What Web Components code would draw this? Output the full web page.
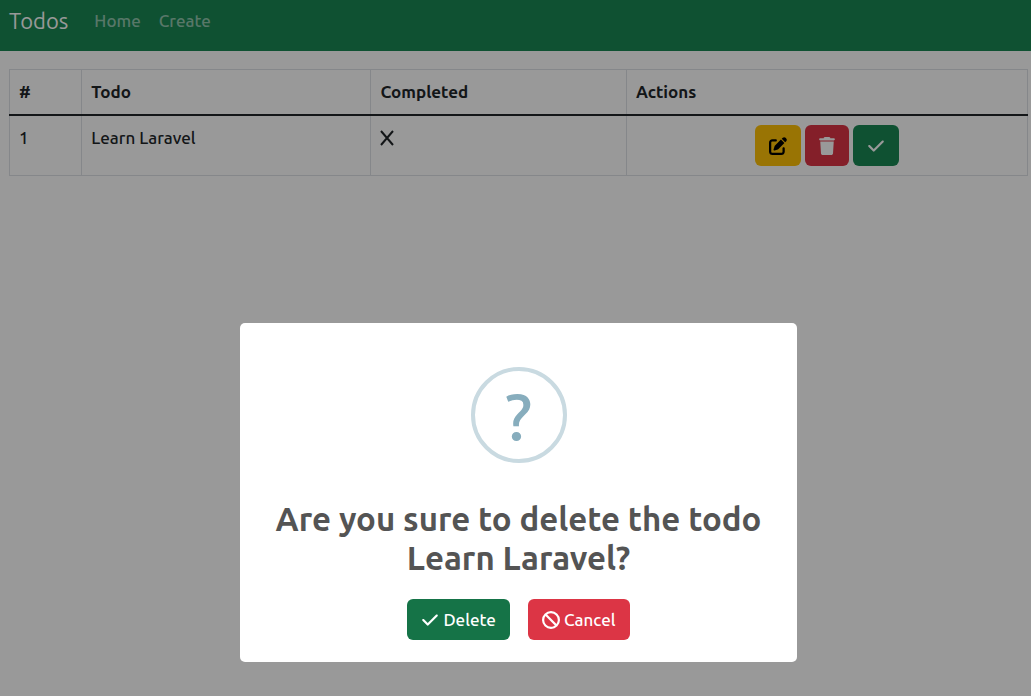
<!DOCTYPE html>
<html lang="en">
<head>
<meta charset="utf-8">
<meta name="viewport" content="width=device-width, initial-scale=1">
<title>Todos</title>
<style>
  body { margin: 0; background: #fff; color: #212529; font: 500 17px/26px Ubuntu, "Noto Sans", sans-serif; }
</style>
</head>
<body>
<todo-app></todo-app>
<script>
const ICONS = {
  edit: ['0 0 512 512', 'M471.6 21.7c-21.9-21.9-57.3-21.9-79.2 0L362.3 51.7l97.9 97.9 30.1-30.1c21.9-21.9 21.9-57.3 0-79.200L471.6 21.7zM172.400 241.700c-6.100 6.100-10.800 13.600-13.500 21.900l-29.600 88.800c-2.900 8.600-.6 18.100 5.800 24.600s15.900 8.700 24.600 5.800l88.800-29.600c8.200-2.700 15.700-7.400 21.900-13.500L437.700 172.300 339.700 74.300zM96 64C43 64 0 107 0 160V416c0 53 43 96 96 96H352c53 0 96-43 96-96V320c0-17.700-14.300-32-32-32s-32 14.300-32 32v96c0 17.700-14.300 32-32 32H96c-17.700 0-32-14.300-32-32V160c0-17.700 14.300-32 32-32h96c17.700 0 32-14.300 32-32s-14.300-32-32-32z'],
  trash: ['0 0 448 512', 'M135.200 17.700C140.600 6.800 151.700 0 163.800 0h120.400c12.100 0 23.200 6.800 28.600 17.700L320 32h96c17.700 0 32 14.300 32 32s-14.300 32-32 32H32C14.300 96 0 81.700 0 64s14.300-32 32-32h96zM32 128h384l-21.200 339c-1.600 25.300-22.600 45-47.900 45H101.100c-25.300 0-46.300-19.700-47.900-45z'],
  check: ['0 0 512 512', 'M470.600 105.400c12.500 12.500 12.500 32.800 0 45.300l-256 256c-12.500 12.500-32.800 12.500-45.300 0l-128-128c-12.500-12.500-12.500-32.800 0-45.300s32.800-12.500 45.300 0L192 338.700 425.400 105.400c12.500-12.500 32.800-12.500 45.300 0z'],
  ban: ['0 0 512 512', 'M367.200 412.500L99.500 144.800C77.100 176.100 64 214.500 64 256c0 106 86 192 192 192 41.500 0 79.900-13.100 111.200-35.500zm45.300-45.300C434.900 335.900 448 297.500 448 256c0-106-86-192-192-192-41.500 0-79.900 13.100-111.200 35.500zM0 256a256 256 0 1 1 512 0A256 256 0 1 1 0 256z']
};

function define(name, html, setup) {
  const template = document.createElement('template');
  template.innerHTML = html;
  customElements.define(name, class extends HTMLElement {
    constructor() {
      super();
      this.attachShadow({ mode: 'open' }).append(template.content.cloneNode(true));
    }
    connectedCallback() { if (setup) setup(this, this.shadowRoot); }
  });
}

define('app-icon', `
  <style>
    :host { display: inline-flex; }
    svg { display: block; height: 18px; fill: currentColor; }
  </style>
  <svg aria-hidden="true"><path/></svg>`,
  (host, root) => {
    const [box, d] = ICONS[host.getAttribute('name')];
    const [, , w, h] = box.split(' ').map(Number);
    const svg = root.querySelector('svg');
    svg.setAttribute('viewBox', box);
    svg.style.width = Math.round(18 * w / h) + 'px';
    root.querySelector('path').setAttribute('d', d);
  });

define('app-button', `
  <style>
    :host { display: inline-block; --bg: #198754; --fg: #fff; }
    :host([kind=warning]) { --bg: #ffc107; --fg: #000; }
    :host([kind=danger]) { --bg: #dc3545; }
    :host([kind=confirm]) { --bg: #157347; }
    button { display: flex; align-items: center; gap: 4px; height: 41px; margin: 0; padding: 0 14px;
      border: 0; border-radius: 6px; background: var(--bg); color: var(--fg); font: inherit; cursor: pointer; }
  </style>
  <button type="button"><slot></slot></button>`,
  (host, root) => {
    const label = host.getAttribute('label');
    if (label) root.querySelector('button').setAttribute('aria-label', label);
  });

define('app-navbar', `
  <style>
    :host { display: block; background: #198754; }
    nav { display: flex; align-items: center; gap: 18px; padding: 8px 9px 17px; }
    a { color: rgba(255,255,255,.55); text-decoration: none; }
    .brand { color: #fff; font-size: 22px; font-weight: 400; margin-right: 8px; }
  </style>
  <nav><a class="brand" href="#">Todos</a><a href="#home">Home</a><a href="#create">Create</a></nav>`);

define('todo-table', `
  <style>
    :host { display: block; }
    table { width: 100%; border-collapse: collapse; table-layout: fixed; }
    th, td { box-sizing: border-box; border: 1px solid #dee2e6; padding: 9px; text-align: left; vertical-align: top; }
    thead th { border-bottom: 2px solid #212529; }
    th:nth-child(1) { width: 7.1%; }
    th:nth-child(2) { width: 28.4%; }
    th:nth-child(3) { width: 25.1%; }
    .actions { display: flex; justify-content: center; gap: 4px; }
    .cross { display: block; width: 14px; height: 26px; }
  </style>
  <table>
    <thead><tr><th scope="col">#</th><th scope="col">Todo</th><th scope="col">Completed</th><th scope="col">Actions</th></tr></thead>
    <tbody><tr>
      <td>1</td><td>Learn Laravel</td>
      <td><svg class="cross" viewBox="0 0 14 26" role="img" aria-label="Not completed"><path d="M1 6L13 20M13 6L1 20" stroke="#212529" stroke-width="2"/></svg></td>
      <td><div class="actions">
        <app-button kind="warning" label="Edit"><app-icon name="edit"></app-icon></app-button>
        <app-button kind="danger" label="Delete"><app-icon name="trash"></app-icon></app-button>
        <app-button label="Complete"><app-icon name="check"></app-icon></app-button>
      </div></td>
    </tr></tbody>
  </table>`);

define('confirm-dialog', `
  <style>
    :host { position: fixed; inset: 0; display: flex; justify-content: center; align-items: flex-end;
      padding: 0 0 34px 6px; box-sizing: border-box; background: rgba(0,0,0,.4); }
    section { width: 54.4%; box-sizing: border-box; padding: 44px 18px 22px; border-radius: 5px; background: #fff;
      display: flex; flex-direction: column; align-items: center; }
    .mark { display: flex; align-items: center; justify-content: center; width: 96px; height: 96px; box-sizing: border-box;
      border: 4px solid #c9dae1; border-radius: 50%; color: #87adbd; font-size: 66px; line-height: 88px; font-weight: 500; }
    h2 { margin: 36px 0 22px; color: #545454; font-size: 33px; line-height: 39px; font-weight: 700; text-align: center; }
    .buttons { display: flex; gap: 18px; }
  </style>
  <section role="dialog" aria-modal="true" aria-labelledby="title">
    <div class="mark">?</div>
    <h2 id="title"><slot></slot></h2>
    <div class="buttons">
      <app-button kind="confirm"><app-icon name="check"></app-icon>Delete</app-button>
      <app-button kind="danger"><app-icon name="ban"></app-icon>Cancel</app-button>
    </div>
  </section>`);

define('todo-app', `
  <style>
    :host { display: block; }
    main { padding: 18px 3px 0 9px; }
  </style>
  <app-navbar></app-navbar>
  <main><todo-table></todo-table></main>
  <confirm-dialog>Are you sure to delete the todo Learn Laravel?</confirm-dialog>`);
</script>
</body>
</html>
